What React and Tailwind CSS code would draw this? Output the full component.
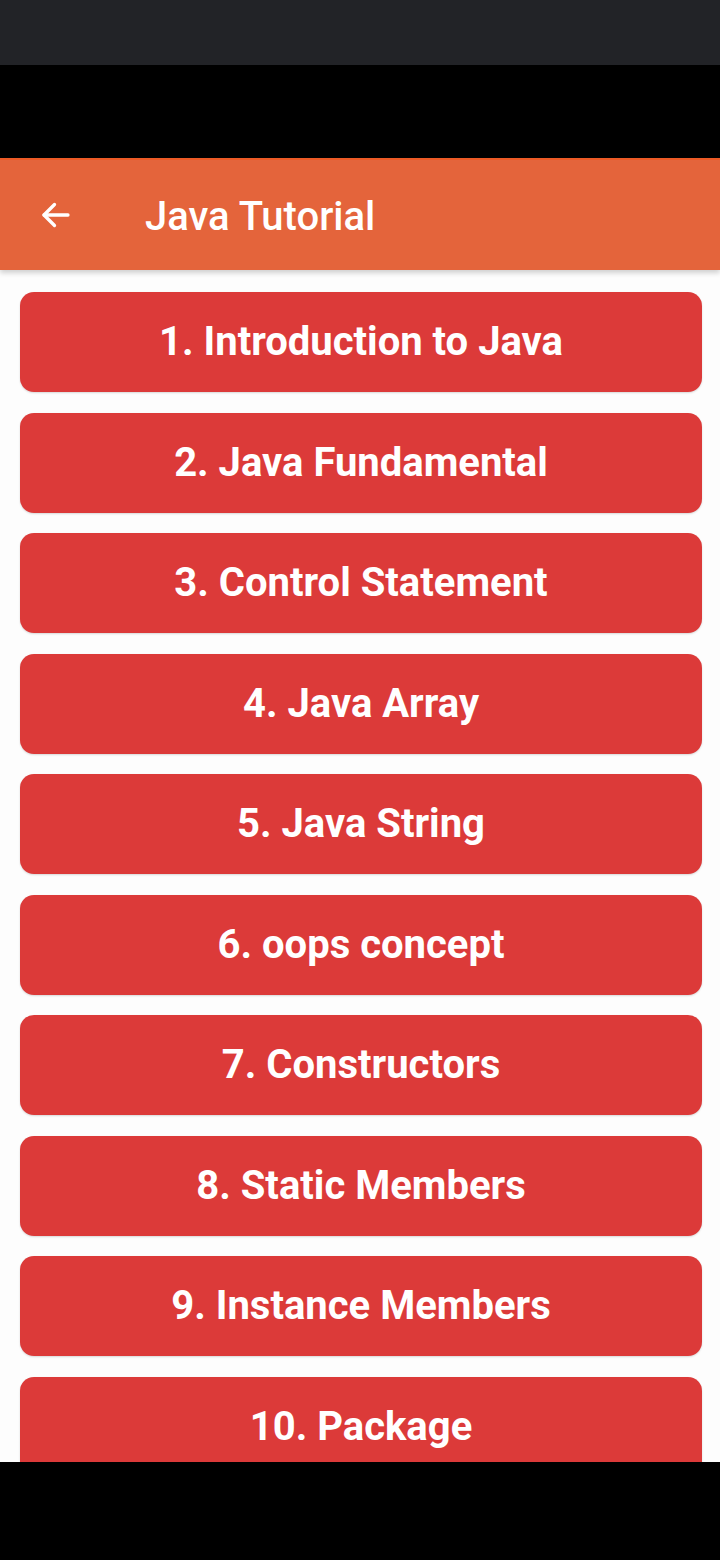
import React from 'react'

const lessons = [
    '1. Introduction to Java',
    '2. Java Fundamental',
    '3. Control Statement',
    '4. Java Array',
    '5. Java String',
    '6. oops concept',
    '7. Constructors',
    '8. Static Members',
    '9. Instance Members',
    '10. Package',
]

export default function App() {
    return (
        <div
            className="flex flex-col h-[1560px] w-[720px] overflow-hidden bg-black"
            style={{ fontFamily: 'Roboto, "Noto Sans", sans-serif' }}
        >
            {/* status bar */}
            <div className="h-[65px] shrink-0 bg-[#222327]" />
            <div className="h-[93px] shrink-0 bg-black" />

            {/* app bar */}
            <div className="relative z-10 h-[112px] shrink-0 flex items-center bg-[#e4643b] border-t-2 border-[#ec5a26] shadow-[0_3px_5px_rgba(0,0,0,0.18)]">
                <svg
                    className="ml-[38px] w-[36px] h-[36px]"
                    viewBox="0 0 24 24"
                    fill="none"
                    stroke="#fff"
                    strokeWidth="2.2"
                    strokeLinecap="round"
                    strokeLinejoin="round"
                >
                    <path d="M20 12H4" />
                    <path d="M11 5l-7 7 7 7" />
                </svg>
                <span className="ml-[71px] pt-[4px] text-[40px] font-medium text-white leading-none">
                    Java Tutorial
                </span>
            </div>

            {/* lesson list */}
            <div className="flex-1 min-h-0 overflow-hidden bg-[#fdfdfd] pt-[22px] pl-[20px] pr-[18px] flex flex-col gap-[20.5px]">
                {lessons.map(title => (
                    <button
                        key={title}
                        className="h-[100px] shrink-0 w-full rounded-[14px] bg-[#dc3a39] text-white text-[40px] font-bold leading-none flex items-center justify-center shadow-[0_1px_2px_rgba(0,0,0,0.15)]"
                    >
                        {title}
                    </button>
                ))}
            </div>

            {/* nav bar */}
            <div className="h-[98px] shrink-0 bg-black" />
        </div>
    )
}
